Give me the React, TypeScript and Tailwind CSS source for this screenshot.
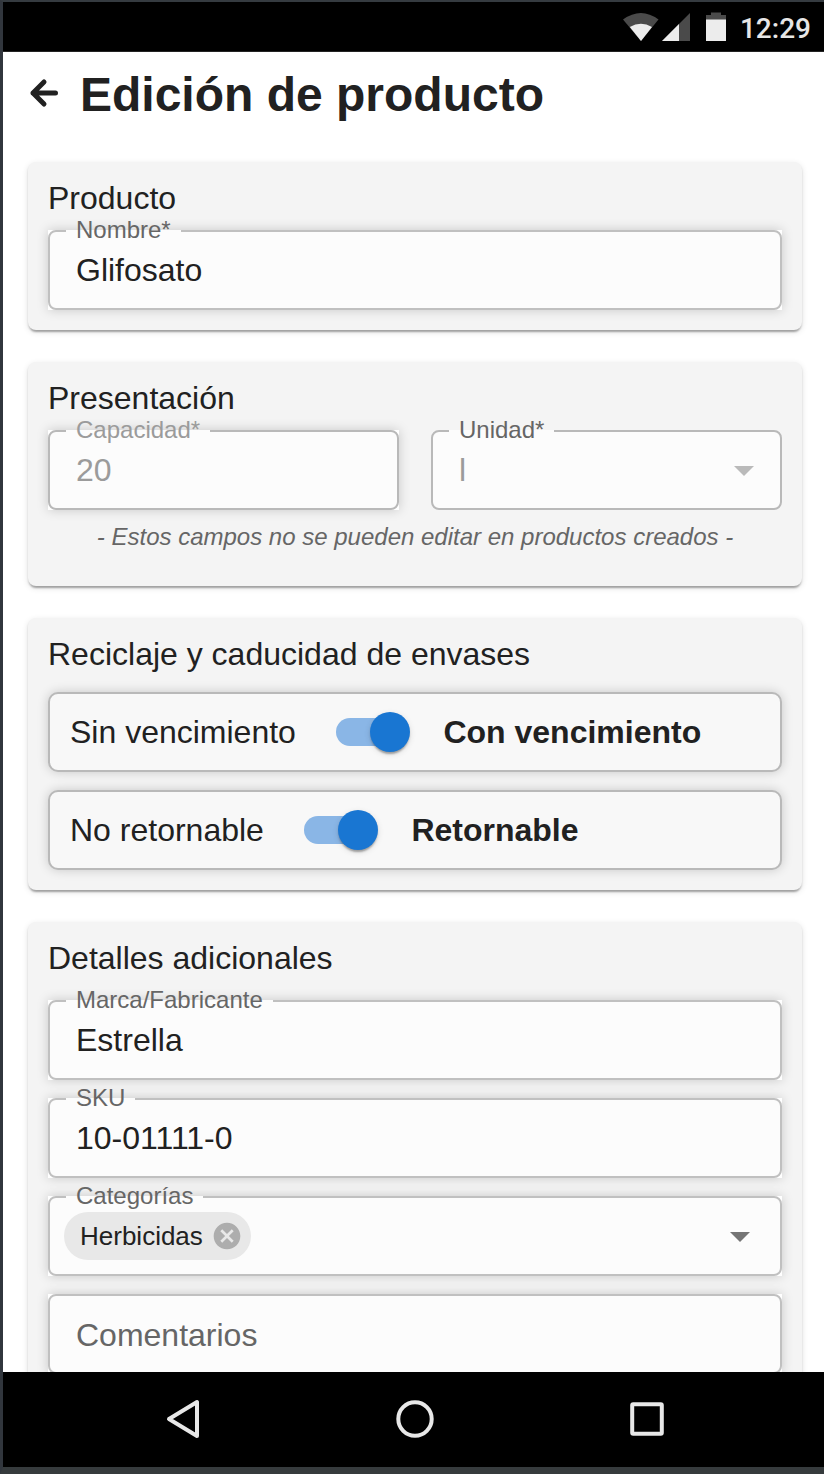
import type { ReactNode } from "react";

function StatusBar() {
  return (
    <div className="flex h-[50px] shrink-0 items-center justify-end border-b border-[#242424] bg-black pr-[13px]">
      <svg width="106" height="32" viewBox="622 11 106 32" className="mr-[12px]">
        <path d="M641 41 623 19.500Q641 6.500 658.500 19.500Z" fill="#4a4a4a" />
        <path d="M641 41 629.800 27Q641 20.500 652 27Z" fill="#ececec" />
        <path d="M662 41 690 13V41Z" fill="#4a4a4a" />
        <path d="M662 41 679 24V41Z" fill="#ececec" />
        <path d="M711 12.500H721V15H726V20H706V15H711Z" fill="#4a4a4a" />
        <path d="M706 19.500H726V41H706Z" fill="#ececec" />
      </svg>
      <span className="pt-[4px] font-['Roboto'] text-[28px] leading-[32px] font-medium text-[#e6e6e6]">12:29</span>
    </div>
  );
}

function Card({ title, className = "", children }: { title: string; className?: string; children: ReactNode }) {
  return (
    <section
      className={`shrink-0 rounded-[8px] bg-[#f4f4f4] p-5 shadow-[0_4px_2px_-2px_rgba(0,0,0,0.2),0_2px_2px_0_rgba(0,0,0,0.14),0_2px_6px_0_rgba(0,0,0,0.12)] ${className}`}
    >
      <h2 className="text-[32px] leading-[32px]">{title}</h2>
      {children}
    </section>
  );
}

type FieldProps = {
  label?: string;
  flat?: boolean;
  disabled?: boolean;
  labelColor?: string;
  className?: string;
  children: ReactNode;
};

function Field({ label, flat, disabled, labelColor = "text-[#666666]", className = "", children }: FieldProps) {
  return (
    <div
      className={`relative h-[80px] ${flat ? "" : "bg-white shadow-[0_0_11px_rgba(0,0,0,0.18)]"} ${className}`}
    >
      <div
        className={`flex h-full items-center rounded-[8px] border-2 bg-[#fcfcfc] px-[26px] text-[32px] leading-[36px] ${disabled ? "border-[#b9b9b9] text-[#9b9b9b]" : "border-[#c0c0c0] text-[#212121]"}`}
      >
        {children}
      </div>
      {label && (
        <div className="absolute top-0 left-[18px] h-[2px] bg-[#fcfcfc] px-[10px]">
          <span className={`relative -top-[14px] block text-[24px] leading-[28px] whitespace-nowrap ${labelColor}`}>
            {label}
          </span>
        </div>
      )}
    </div>
  );
}

function Caret({ className }: { className: string }) {
  return (
    <svg width="20" height="10" viewBox="0 0 20 10" className={className}>
      <path d="M0 0H20L10 10Z" fill="currentColor" />
    </svg>
  );
}

function ToggleRow({ off, on }: { off: string; on: string }) {
  return (
    <div className="flex h-[80px] items-center rounded-[10px] border-2 border-[#b9b9b9] bg-[#f8f8f8] pl-[20px] text-[32px] leading-[36px] shadow-[0_0_11px_rgba(0,0,0,0.18)]">
      <span>{off}</span>
      <span className="mr-[33.5px] ml-[40px] flex h-[28px] w-[74px] items-center">
        <span className="h-[28px] w-[68px] rounded-full bg-[#8ab6e6]" />
        <span className="-ml-[34px] size-[40px] shrink-0 rounded-full bg-[#1976d2] shadow-[0_4px_2px_-2px_rgba(0,0,0,0.2),0_2px_2px_0_rgba(0,0,0,0.14),0_2px_6px_0_rgba(0,0,0,0.12)]" />
      </span>
      <span className="font-bold">{on}</span>
    </div>
  );
}

function NavigationBar() {
  return (
    <nav className="flex h-[95px] shrink-0 items-center bg-black pb-[1px] pl-[162px] text-[#e8e8e8]">
      <svg width="36" height="40" viewBox="0 0 36 40" fill="none" stroke="currentColor" strokeWidth="4" strokeLinejoin="round">
        <path d="M32 3V37L4 20Z" />
      </svg>
      <svg width="40" height="40" viewBox="0 0 40 40" fill="none" stroke="currentColor" strokeWidth="4" className="ml-[194px]">
        <circle cx="20" cy="20" r="16.7" />
      </svg>
      <svg width="36" height="36" viewBox="0 0 36 36" fill="none" stroke="currentColor" strokeWidth="4" strokeLinejoin="round" className="ml-[194px]">
        <rect x="3.2" y="3.2" width="29.6" height="29.6" rx="1" />
      </svg>
    </nav>
  );
}

export default function App() {
  return (
    <div className="flex h-[1474px] w-[824px] flex-col overflow-hidden border-t-2 border-b-[7px] border-l-[3px] border-t-[#353b40] border-b-[#363b3d] border-l-[#31363d] bg-white font-['Liberation_Sans',sans-serif] text-[#212121]">
      <StatusBar />
      <main className="flex h-[1320px] shrink-0 flex-col overflow-hidden pr-[22px] pl-[25px]">
        <header className="flex h-[110px] shrink-0 items-start pt-[15px]">
          <svg width="30" height="32" viewBox="0 0 30 32" fill="none" stroke="currentColor" strokeWidth="5" strokeLinecap="round" strokeLinejoin="round" className="mt-[10px] ml-[1px]">
            <path d="M15 5 4 16 15 27M4 16H26.500" />
          </svg>
          <h1 className="ml-[21px] text-[48px] leading-[56px] font-bold">Edición de producto</h1>
        </header>
        <div className="flex flex-col gap-8">
          <Card title="Producto">
            <Field label="Nombre*" className="mt-4">
              Glifosato
            </Field>
          </Card>
          <Card title="Presentación" className="h-[224px]">
            <div className="mt-4 grid grid-cols-2 gap-8">
              <Field label="Capacidad*" disabled labelColor="text-[#9b9b9b]">
                20
              </Field>
              <Field label="Unidad*" flat disabled>
                <span>l</span>
                <Caret className="mt-[2px] ml-auto text-[#bababa]" />
              </Field>
            </div>
            <p className="mt-[13px] text-center text-[24px] leading-[28px] text-[#666666] italic">
              - Estos campos no se pueden editar en productos creados -
            </p>
          </Card>
          <Card title="Reciclaje y caducidad de envases">
            <div className="mt-[22px] flex flex-col gap-[18px]">
              <ToggleRow off="Sin vencimiento" on="Con vencimiento" />
              <ToggleRow off="No retornable" on="Retornable" />
            </div>
          </Card>
          <Card title="Detalles adicionales">
            <div className="mt-[26px] flex flex-col gap-[18px]">
              <Field label="Marca/Fabricante">Estrella</Field>
              <Field label="SKU">10-01111-0</Field>
              <Field label="Categorías">
                <span className="-ml-[12px] flex h-[48px] items-center rounded-full bg-[#e8e8e8] pr-[8px] pl-[16px] text-[26px] leading-[30px]">
                  Herbicidas
                  <svg width="32" height="32" viewBox="0 0 24 24" className="ml-[8px]">
                    <path
                      fill="#adadad"
                      d="M12 2C6.47 2 2 6.47 2 12s4.470 10 10 10 10-4.470 10-10S17.530 2 12 2zm5 13.590L15.590 17 12 13.410 8.410 17 7 15.590 10.590 12 7 8.410 8.410 7 12 10.590 15.590 7 17 8.410 13.410 12 17 15.590z"
                    />
                  </svg>
                </span>
                <Caret className="mt-[2px] mr-[4px] ml-auto text-[#757575]" />
              </Field>
              <Field>
                <span className="pt-[2px] text-[#666666]">Comentarios</span>
              </Field>
            </div>
          </Card>
        </div>
      </main>
      <NavigationBar />
    </div>
  );
}
